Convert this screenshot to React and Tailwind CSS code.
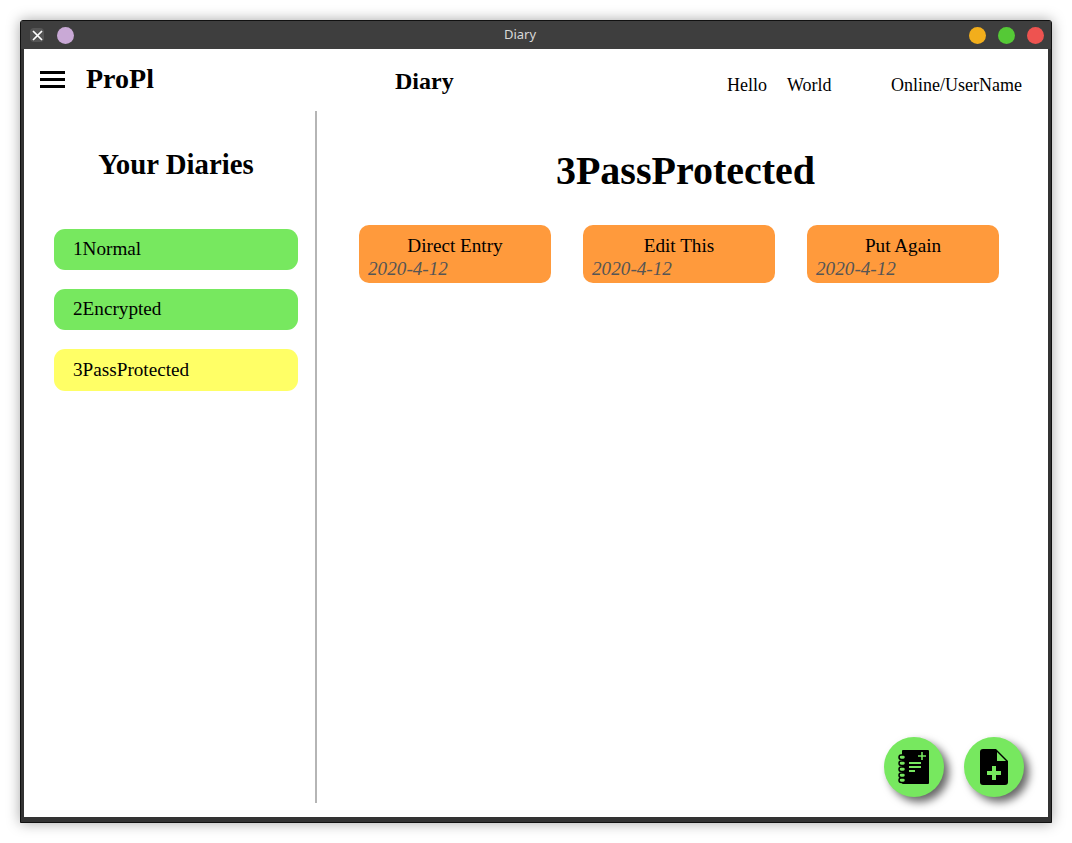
import React from "react";

const diaries = [
  { name: "1Normal", color: "bg-[#77e85f]", height: "h-[41px]" },
  { name: "2Encrypted", color: "bg-[#77e85f]", height: "h-[41px]" },
  { name: "3PassProtected", color: "bg-[#ffff66]", height: "h-[42px]" },
];

const entries = ["Direct Entry", "Edit This", "Put Again"];

const NotebookIcon = () => (
  <svg width="32" height="36" viewBox="0 0 32 36" className="block">
    <rect x="4" y="1" width="27" height="34" rx="1" fill="#000" />
    {[6, 12, 18, 24, 29].map((y) => (
      <rect key={y} x="1" y={y} width="6.500" height="4.500" rx="2.200" fill="#77e85f" stroke="#000" strokeWidth="1.500" />
    ))}
    <path d="M11 14h12M11 18h12M11 22h6" stroke="#77e85f" strokeWidth="1.800" fill="none" />
    <path d="M24 3v8M20 7h8" stroke="#77e85f" strokeWidth="1.600" fill="none" />
  </svg>
);

const NotePlusIcon = () => (
  <svg width="28" height="36" viewBox="0 0 28 36" className="block">
    <path d="M3 0h13l12 12v21a3 3 0 0 1-3 3H3a3 3 0 0 1-3-3V3a3 3 0 0 1 3-3z" fill="#000" />
    <path d="M17 3l9 9h-9z" fill="#77e85f" />
    <path d="M14 17v14M7 24h14" stroke="#77e85f" strokeWidth="4" fill="none" />
  </svg>
);

export default function App() {
  return (
    <div className="h-[843px] w-[1072px] overflow-hidden bg-white pl-[20px] pt-[20px] font-['Liberation_Serif',serif] text-black">
      <div className="flex h-[803px] w-[1032px] flex-col rounded-t-[3px] border border-[#111] bg-[#333] shadow-[0_0_14px_rgba(0,0,0,0.35)]">
        <div className="flex h-[28px] shrink-0 items-center bg-[#3e3e3e] pl-[9px] pr-[7px]">
          <div className="flex h-[14px] w-[14px] items-center justify-center rounded-[4px] bg-[#555]">
            <svg width="11" height="11" viewBox="0 0 11 11">
              <path d="M1 1l9 9M10 1l-9 9" stroke="#fff" strokeWidth="1.700" />
            </svg>
          </div>
          <div className="ml-[13px] h-[17px] w-[17px] rounded-full bg-[#c9a9d6]" />
          <div className="flex-1 pr-[3px] text-center font-['Noto_Sans',sans-serif] text-[13px] text-[#d8d8d8]">Diary</div>
          <div className="flex gap-[12px]">
            <div className="h-[17px] w-[17px] rounded-full bg-[#f2ae1c]" />
            <div className="h-[17px] w-[17px] rounded-full bg-[#55c936]" />
            <div className="h-[17px] w-[17px] rounded-full bg-[#ee5350]" />
          </div>
        </div>

        <div className="relative mx-[3px] flex h-[768px] shrink-0 flex-col bg-white">
          <header className="flex h-[62px] shrink-0 items-start">
            <div className="ml-[16px] mt-[22px] flex w-[25px] flex-col gap-[4px]">
              <div className="h-[3px] bg-black" />
              <div className="h-[3px] bg-black" />
              <div className="h-[3px] bg-black" />
            </div>
            <div className="ml-[21px] mt-[12px] w-[309px] text-[28px] font-bold leading-[36px]">ProPl</div>
            <div className="mt-[17px] w-[332px] text-[24px] font-bold leading-[30px]">Diary</div>
            <div className="mt-[24px] w-[60px] text-[18px] leading-[24px]">Hello</div>
            <div className="mt-[24px] w-[104px] text-[18px] leading-[24px]">World</div>
            <div className="mt-[24px] text-[18px] leading-[24px]">Online/UserName</div>
          </header>

          <div className="flex h-[692px] shrink-0">
            <aside className="flex w-[293px] shrink-0 flex-col items-start border-r-2 border-[#b5b5b5] pl-[30px]">
              <h2 className="mt-[35px] w-[244px] whitespace-nowrap text-center text-[28.800px] font-bold leading-[36px]">Your Diaries</h2>
              <div className="mt-[47px] flex w-[244px] flex-col gap-[19px]">
                {diaries.map((d) => (
                  <div key={d.name} className={`flex items-center rounded-[11px] pl-[19px] text-[19.200px] ${d.color} ${d.height}`}>
                    {d.name}
                  </div>
                ))}
              </div>
            </aside>

            <main className="flex-1">
              <h1 className="mt-[36px] pl-[6px] text-center text-[40px] font-bold leading-[48px]">3PassProtected</h1>
              <div className="ml-[42px] mt-[30px] flex gap-[32px]">
                {entries.map((title) => (
                  <div key={title} className="h-[58px] w-[192px] rounded-[10px] bg-[#ff9a3c] px-[9px] pt-[9px] text-[19.200px] leading-[23px]">
                    <div className="text-center">{title}</div>
                    <div className="italic text-[#555]">2020-4-12</div>
                  </div>
                ))}
              </div>
            </main>
          </div>

          <button className="absolute left-[860px] top-[688px] flex h-[60px] w-[60px] items-center justify-center rounded-full bg-[#77e85f] shadow-[5px_5px_8px_rgba(0,0,0,0.6)]">
            <NotebookIcon />
          </button>
          <button className="absolute left-[940px] top-[688px] flex h-[60px] w-[60px] items-center justify-center rounded-full bg-[#77e85f] shadow-[5px_5px_8px_rgba(0,0,0,0.6)]">
            <NotePlusIcon />
          </button>
        </div>
      </div>
    </div>
  );
}
